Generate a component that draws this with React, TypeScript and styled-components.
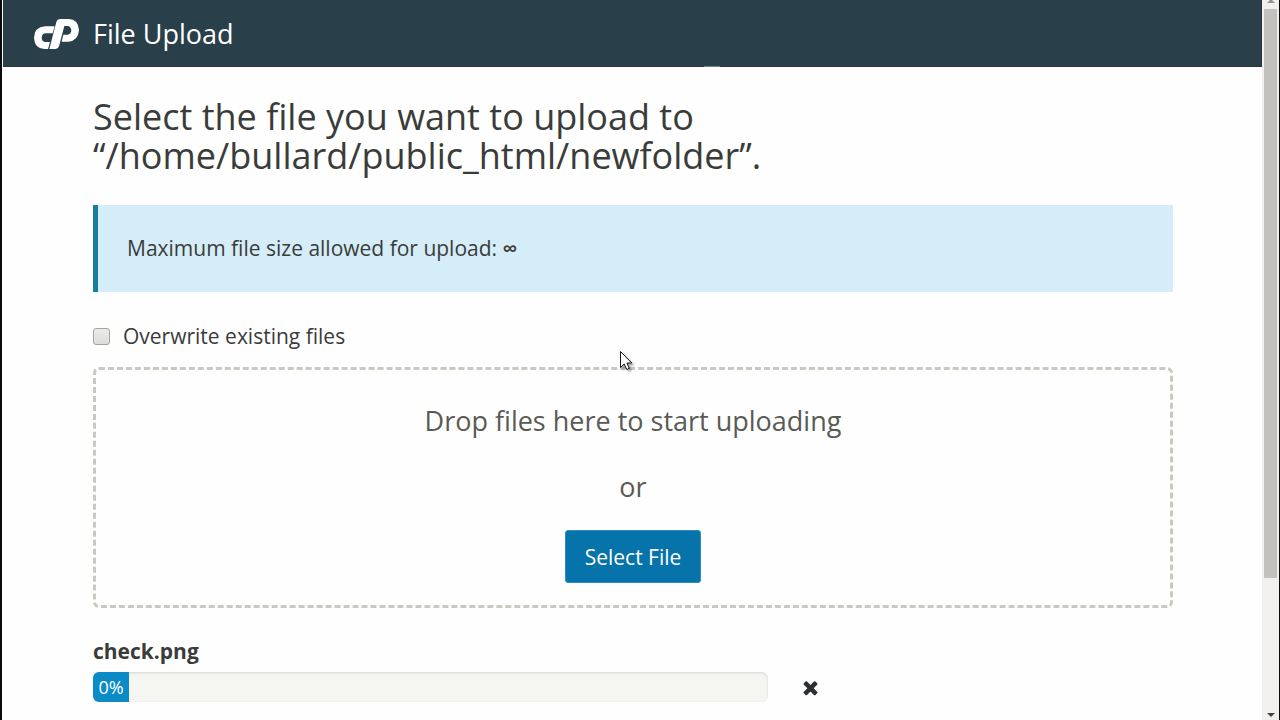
import React, { useState } from "react";
import styled, { createGlobalStyle } from "styled-components";

const GlobalStyle = createGlobalStyle`
  *, *::before, *::after { box-sizing: border-box; }
  body {
    margin: 0;
    background: #fefefe;
    color: #3a3c39;
    font-family: "Open Sans", "Noto Sans", sans-serif;
    font-size: 21px;
    line-height: 30px;
  }
`;

const Shell = styled.div`
  display: grid;
  grid-template-columns: minmax(0, 1fr) 17px;
  min-height: 100vh;
  padding-left: 1px;
  border-left: 2px solid #0c0c0c;
  border-right: 1px solid #0c0c0c;
`;

const Header = styled.header`
  display: flex;
  align-items: center;
  gap: 14px;
  height: 67px;
  padding: 2px 31px 0;
  background: #293f4a;
  border-bottom: 1px solid #2c363b;
  border-right: 1px solid #2c363b;
  color: #fff;
`;

const Logo = styled.svg`
  display: block;
  width: 45px;
  height: 30px;
  fill: #fff;
`;

const AppName = styled.div`
  font-size: 27px;
  line-height: 36px;
`;

const Main = styled.main`
  padding: 30px 89px 18px 90px;
`;

const Title = styled.h1`
  margin: 0 0 30px;
  font-size: 36px;
  font-weight: 400;
  line-height: 39px;
`;

const Notice = styled.div`
  padding: 28px 29px 29px;
  background: #d5edf8;
  border-left: 5px solid #177c9e;
`;

const Limit = styled.span`
  font-weight: 600;
`;

const Option = styled.label`
  display: flex;
  align-items: center;
  gap: 13px;
  width: fit-content;
  margin: 29px 0 16px;
`;

const Checkbox = styled.input`
  appearance: none;
  width: 17px;
  height: 17px;
  margin: 0;
  border: 1px solid #a3a3a0;
  border-radius: 3px;
  background: linear-gradient(#ececea, #dcdcda);
  &:checked { background: #0673aa; }
`;

const DropZone = styled.section`
  display: flex;
  flex-direction: column;
  align-items: center;
  gap: 30px;
  padding: 33px 20px 22px;
  border: 3px dashed #c9c9c1;
  border-radius: 6px;
`;

const DropText = styled.p`
  margin: 0;
  color: #5a5a55;
  font-size: 27px;
  line-height: 36px;
`;

const SelectButton = styled.button`
  padding: 11px 19px 10px;
  margin-top: -5px;
  border: 1px solid #2b8ec4;
  border-radius: 3px;
  background: #0673aa;
  color: #fff;
  font: inherit;
  cursor: pointer;
`;

const FileName = styled.div`
  margin-top: 28px;
  font-weight: 700;
`;

const UploadRow = styled.div`
  display: grid;
  grid-template-columns: minmax(0, 5fr) minmax(0, 3fr);
  align-items: center;
  margin-top: 6px;
`;

const Progress = styled.div`
  height: 30px;
  overflow: hidden;
  border-radius: 6px;
  background: #f5f5f2;
  box-shadow: inset 0 1px 3px rgba(0, 0, 0, 0.12);
`;

const ProgressFill = styled.div`
  min-width: 36px;
  height: 100%;
  background: #0a8bc6;
  color: #fff;
  font-size: 18px;
  text-align: center;
`;

const RemoveButton = styled.button`
  display: flex;
  width: 21px;
  margin-left: 32px;
  padding: 0;
  border: 0;
  background: none;
  color: #2b3033;
  cursor: pointer;
`;

const ScrollTrack = styled.aside`
  display: flex;
  flex-direction: column;
  align-items: center;
  height: 100vh;
  background: #f1f0ef;
`;

const ScrollArrow = styled.svg`
  display: block;
  flex: none;
  width: 8px;
  height: 9px;
`;

const Thumb = styled.div`
  width: 13px;
  height: 79%;
  margin-bottom: auto;
  background: #c3c1bd;
`;

const Pointer = styled.svg`
  position: absolute;
  left: 619px;
  top: 350px;
  width: 18px;
  height: 24px;
  pointer-events: none;
  filter: drop-shadow(2px 2px 1px rgba(0, 0, 0, 0.35));
`;

const TabNotch = styled.span`
  position: absolute;
  left: 704px;
  top: 66px;
  width: 16px;
  height: 1px;
  background: #78868c;
`;

export default function App() {
  const [overwrite, setOverwrite] = useState(false);
  const progress = 0;

  return (
    <>
      <GlobalStyle />
      <Shell>
        <div>
          <Header>
            <Logo viewBox="0 0 135 90" aria-label="cPanel" role="img">
              <path d="M33 22H62L56 43H36Q24 43 23 56Q23 68 35 69H48L42 90H31Q2 89 0 57Q1 24 33 22Z" />
              <path
                fillRule="evenodd"
                d="M67 9Q70 0 79 0H104Q133 1 135 33Q133 65 103 68H83L88 47H102Q111 45 112 34Q111 23 102 21H91L75 82Q73 90 65 90H46Z"
              />
            </Logo>
            <AppName>File Upload</AppName>
          </Header>
          <Main>
            <Title>
              Select the file you want to upload to
              <br />
              “/home/bullard/public_html/newfolder”.
            </Title>
            <Notice>
              Maximum file size allowed for upload: <Limit>∞</Limit>
            </Notice>
            <Option>
              <Checkbox
                type="checkbox"
                checked={overwrite}
                onChange={(e) => setOverwrite(e.target.checked)}
              />
              Overwrite existing files
            </Option>
            <DropZone>
              <DropText>Drop files here to start uploading</DropText>
              <DropText>or</DropText>
              <SelectButton type="button">Select File</SelectButton>
            </DropZone>
            <FileName>check.png</FileName>
            <UploadRow>
              <Progress role="progressbar" aria-valuenow={progress} aria-label="check.png">
                <ProgressFill style={{ width: `${progress}%` }}>{progress}%</ProgressFill>
              </Progress>
              <RemoveButton type="button" aria-label="Remove">
                <svg viewBox="0 0 1792 1792" width="21" height="21" fill="currentColor">
                  <path d="M1490 1322q0 40-28 68l-136 136q-28 28-68 28t-68-28l-294-294-294 294q-28 28-68 28t-68-28l-136-136q-28-28-28-68t28-68l294-294-294-294q-28-28-28-68t28-68l136-136q28-28 68-28t68 28l294 294 294-294q28-28 68-28t68 28l136 136q28 28 28 68t-28 68l-294 294 294 294q28 28 28 68z" />
                </svg>
              </RemoveButton>
            </UploadRow>
          </Main>
        </div>
        <ScrollTrack aria-hidden="true">
          <ScrollArrow viewBox="0 0 8 9" fill="#94928f">
            <path d="M0 3L4 -1L8 3Z" />
          </ScrollArrow>
          <Thumb />
          <ScrollArrow viewBox="0 0 8 9" fill="#404040">
            <path d="M0 2H8L4 6Z" />
          </ScrollArrow>
        </ScrollTrack>
      </Shell>
      <TabNotch />
      <Pointer viewBox="0 0 18 24">
        <path
          d="M1.500 1.500V17.500L5.200 14L7.800 19.500L10.300 18.300L7.900 13H12.800Z"
          fill="#fff"
          stroke="#151515"
          strokeWidth="1"
        />
      </Pointer>
    </>
  );
}
